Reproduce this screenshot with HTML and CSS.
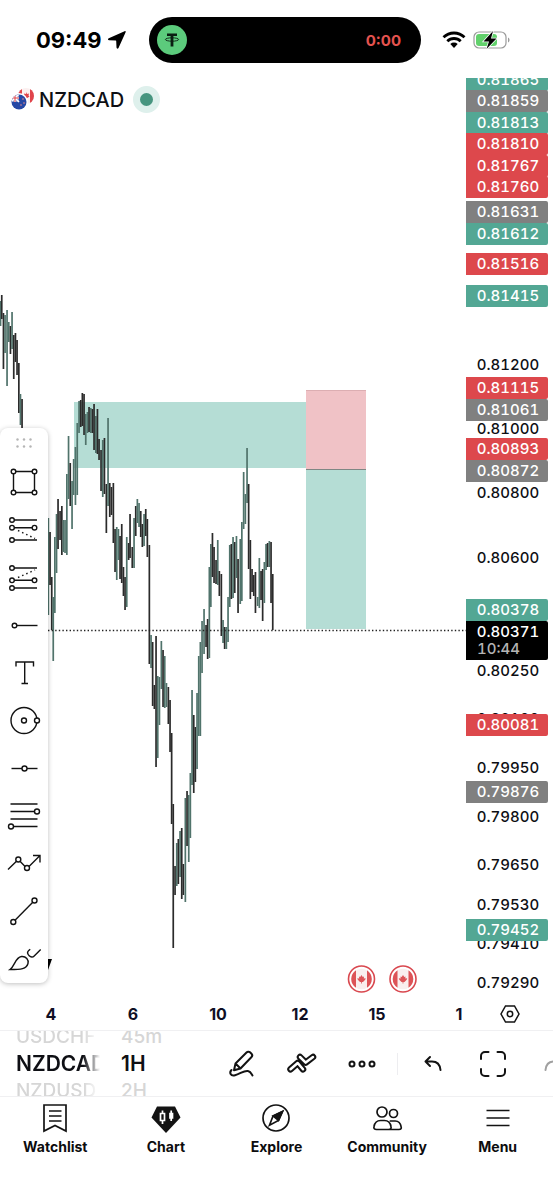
FILE: index.html
```html
<!DOCTYPE html>
<html lang="en">
<head>
  <meta charset="UTF-8">
  <title>NZDCAD</title>
  <meta name="viewport" content="width=device-width, initial-scale=1.0">
  <link rel="stylesheet" href="styles.css">
</head>
<body>

  <header class="status">
    <div class="clock">
      <span>09:49</span>
      <svg width="20" height="20" viewBox="0 0 20 20"><path d="M17.6 1.2 1.8 8.2c-1.2.6-1 1.9.3 2l6.6.3c.3 0 .5.2.5.5l.3 6.6c.1 1.3 1.4 1.5 2 .3l7-15.3c.5-1.1 0-1.8-.9-1.4z"/></svg>
    </div>
    <div class="island">
      <svg width="30" height="30" viewBox="0 0 30 30">
        <circle cx="15" cy="15" r="15" fill="#5ccb7c"/>
        <path d="M10 8.5h10v2.600h-3.600v10.400h-2.800V11.100H10z" fill="#0b1d12"/>
        <ellipse cx="15" cy="14.500" rx="6.600" ry="1.700" fill="none" stroke="#0b1d12" stroke-width=".9"/>
      </svg>
      <span>0:00</span>
    </div>
    <div class="signals">
      <svg width="24" height="18" viewBox="0 0 24 18">
        <path d="M1.5 6.3a15 15 0 0 1 21 0M5.300 10.200a9.600 9.600 0 0 1 13.400 0" fill="none" stroke="#000" stroke-width="2.800"/>
        <path d="M8.300 13a5.400 5.400 0 0 1 7.400 0L12 17z"/>
      </svg>
      <svg width="38" height="20" viewBox="0 0 38 20">
        <rect x="1" y="2" width="32" height="16" rx="5" fill="none" stroke="#9a9a9a" stroke-width="1.2"/>
        <path d="M35 7.500c2 .8 2 4.200 0 5z" fill="#9a9a9a"/>
        <rect x="3" y="4" width="21" height="12" rx="3" fill="#62d16c"/>
        <path d="M20 1 10.500 11.500h5.500L13.500 19 23.500 8.500H18z" stroke="#fff" stroke-width="1.5" paint-order="stroke"/>
      </svg>
    </div>
  </header>

  <main class="chart">
    <svg class="plot" id="plot"></svg>
    <div class="axis">
      <svg class="prices" id="prices"></svg>
      <button class="axis-settings" aria-label="Axis settings">
        <svg width="20" height="18" viewBox="0 0 20 18"><path d="M5.500 1h9L19 9l-4.500 8h-9L1 9z"/><circle cx="10" cy="9" r="2.700"/></svg>
      </button>
    </div>

    <h1 class="symbol">
      <svg width="24" height="24" viewBox="0 0 24 24">
        <clipPath id="cad"><circle cx="15" cy="8" r="8"/></clipPath>
        <g clip-path="url(#cad)">
          <rect x="7" width="16" height="16" fill="#fbf0f0"/>
          <path d="M7 0h4v16H7zM19 0h4v16h-4zM15 4l1 2 2-.5-.5 2 1 1-3 2-3-2 1-1-.5-2 2 .5z" fill="#e0444b"/>
        </g>
        <circle cx="8" cy="14" r="9" fill="#fff"/>
        <clipPath id="nzd"><circle cx="8" cy="14" r="7.5"/></clipPath>
        <g clip-path="url(#nzd)">
          <rect y="6" width="16" height="16" fill="#2547a5"/>
          <path d="M0 6h8v8H0z" fill="#7d8fca"/>
          <path d="M0 10h8M4 6v8M1 7l7 7M8 6l-7 7" stroke="#fff" stroke-width="1.6"/>
          <path d="M0 10h8M4 6v8" stroke="#e0444b"/>
          <circle cx="12" cy="11" r=".8" fill="#e88"/><circle cx="10" cy="17" r=".8" fill="#e88"/><circle cx="13" cy="15" r=".8" fill="#e88"/>
        </g>
      </svg>
      NZDCAD
      <span class="market-open"></span>
    </h1>

    <div class="tools">
      <svg class="grip" width="48" height="33" viewBox="0 0 48 33">
        <circle cx="17.5" cy="11.5" r="1.2"/><circle cx="24" cy="11.5" r="1.2"/><circle cx="30.5" cy="11.5" r="1.2"/>
        <circle cx="17.5" cy="18.5" r="1.2"/><circle cx="24" cy="18.5" r="1.2"/><circle cx="30.5" cy="18.5" r="1.2"/>
      </svg>
      <button aria-label="Rectangle"><svg viewBox="0 0 48 42"><path d="M13.5 10.5h21v21h-21z"/><circle cx="13.5" cy="10.5" r="2.3"/><circle cx="34.5" cy="10.5" r="2.3"/><circle cx="13.5" cy="31.5" r="2.3"/><circle cx="34.5" cy="31.5" r="2.3"/></svg></button>
      <button aria-label="Long position"><svg viewBox="0 0 48 42"><path d="M12 11h25M12 18.7h22M12 31h25"/><path class="dots" d="M18 21.5 35 29.5"/><circle cx="12" cy="11" r="2.3"/><circle cx="12" cy="18.7" r="2.3"/><circle cx="34.5" cy="18.7" r="2.3"/><circle cx="12" cy="31" r="2.3"/></svg></button>
      <button aria-label="Short position"><svg viewBox="0 0 48 42"><path d="M12 11h25M12 23.3h22M12 31h25"/><path class="dots" d="M18 20.5 35 13"/><circle cx="12" cy="11" r="2.3"/><circle cx="12" cy="23.3" r="2.3"/><circle cx="34.5" cy="23.3" r="2.3"/><circle cx="12" cy="31" r="2.3"/></svg></button>
      <button aria-label="Horizontal ray"><svg viewBox="0 0 48 42"><path d="M14.5 20.5h23"/><circle cx="14.5" cy="20.5" r="2.3"/></svg></button>
      <button aria-label="Text"><svg viewBox="0 0 48 42"><path d="M16 13.5V9h17.5v4.5M24.7 9v21.5M21.5 30.5H28"/></svg></button>
      <button aria-label="Circle"><svg viewBox="0 0 48 42"><circle cx="24" cy="19.5" r="13"/><circle cx="24" cy="19.5" r="2.5"/><circle cx="37" cy="19.5" r="2.5"/></svg></button>
      <button aria-label="Horizontal line"><svg viewBox="0 0 48 42"><path d="M11.5 19.5h26"/><circle cx="24.5" cy="19.5" r="2.5"/></svg></button>
      <button aria-label="Fib retracement"><svg viewBox="0 0 48 42"><path d="M10.5 7h27M10.5 14.5h27M10.5 22h27M10.5 29.5h27"/><circle cx="37" cy="14.5" r="2.5"/><circle cx="11" cy="29.5" r="2.5"/></svg></button>
      <button aria-label="Path"><svg viewBox="0 0 48 42"><path d="M8 24.5 18.3 14.5 27 23.5 40 10.5M33 10.5h7v7"/><circle cx="18.3" cy="14.5" r="2.5"/><circle cx="27" cy="23" r="2.5"/></svg></button>
      <button aria-label="Trend line"><svg viewBox="0 0 48 42"><path d="M34.5 7.5 13.3 29"/><circle cx="34.5" cy="7.5" r="2.5"/><circle cx="13.3" cy="29" r="2.5"/></svg></button>
      <button aria-label="Brush"><svg viewBox="0 0 48 42"><path d="M10 28.500C15 25 15 16.500 21.500 15.500c4.500-.5 7.500 3.500 6.500 7-1.500 5.500-7 6-18 6zM40.700 8.500l-6.500 6.500c-1.500 1.500-3.500 1.200-5-.3-2-2-2.200-3.500-.7-5l1.700-1.500"/></svg></button>
    </div>
  </main>

  <section class="toolbar">
    <div class="wheel wheel-symbol">
      <button>USDCHF</button>
      <button class="current">NZDCAD</button>
      <button>NZDUSD</button>
    </div>
    <div class="wheel wheel-interval">
      <button>45m</button>
      <button class="current">1H</button>
      <button>2H</button>
    </div>
    <button class="action" aria-label="Draw">
      <svg width="30" height="30" viewBox="0 0 30 30"><path d="M8.500 14.500 19.500 3.500c1-1 2.500-1.200 3.500-.2l1.500 1.500c1 1 .8 2.500-.2 3.500L13.500 19.500l-6.500 1.700zM8.500 14.500l5 5M4.500 21c-2.500 2.500-1 6.500 3.500 5.300 5-1.300 9.500-5.300 13-4.300 2.500.6 3.300 2.500 4.500 4.500"/></svg>
    </button>
    <button class="action" aria-label="Indicators">
      <svg width="30" height="24" viewBox="0 0 30 24">
        <path class="outer" d="M3.500 17.300 10.700 11l5.300 6.300M13 5l5.700 5.600 7.300-5.600"/>
        <path class="inner" d="M3.500 17.300 10.700 11l5.300 6.300M13 5l5.700 5.600 7.300-5.600"/>
      </svg>
    </button>
    <button class="action" aria-label="More">
      <svg width="28" height="10" viewBox="0 0 28 10"><circle cx="4" cy="5" r="2.5"/><circle cx="14" cy="5" r="2.5"/><circle cx="24" cy="5" r="2.5"/></svg>
    </button>
    <span class="divider"></span>
    <button class="action" aria-label="Undo">
      <svg width="20" height="18" viewBox="0 0 20 18"><path d="M7 2 2.500 6.500 7 11M2.500 6.500H9c5 0 8 3.500 8.500 8.500"/></svg>
    </button>
    <button class="action" aria-label="Full screen">
      <svg width="28" height="28" viewBox="0 0 28 28"><path d="M2 9V6a4 4 0 0 1 4-4h3.500M18.500 2H22a4 4 0 0 1 4 4v3M26 19v3a4 4 0 0 1-4 4h-3.500M9.500 26H6a4 4 0 0 1-4-4v-3"/></svg>
    </button>
    <button class="action faded" aria-label="Redo">
      <svg width="20" height="18" viewBox="0 0 20 18"><path d="M13 2l4.500 4.500L13 11M17.500 6.500H11c-5 0-8 3.500-8.500 8.500"/></svg>
    </button>
  </section>

  <nav class="tabs">
    <a href="#watchlist">
      <svg width="32" height="32" viewBox="0 0 32 32"><path d="M5 3h22v26l-11-5.500L5 29zM10 9h12.500M10 14h12.500M10 19h12.500"/></svg>
      Watchlist
    </a>
    <a href="#chart">
      <svg width="32" height="32" viewBox="0 0 32 32">
        <path d="M7 4.500h18L30.500 15.500 16 31 1.500 15.500z" fill="#131313" stroke="none"/>
        <path d="M10.500 11.500h4v7h-4zM12.500 8.500v3M12.500 18.500v3.500" stroke="#fff"/>
        <path d="M20 11.500h2.500v4.500H20zM21.200 8.500v10.500" fill="#fff" stroke="#fff"/>
      </svg>
      Chart
    </a>
    <a href="#explore">
      <svg width="32" height="32" viewBox="0 0 32 32"><circle cx="16" cy="16" r="13"/><path d="M22.500 9.500 13 14l-3.500 9.200 9-4.700z"/><path d="M22.500 9.500 13 14l5.500 4.500z" fill="#131313"/></svg>
      Explore
    </a>
    <a href="#community">
      <svg width="32" height="32" viewBox="0 0 32 32"><circle cx="11" cy="10" r="5"/><circle cx="22.500" cy="11.500" r="4"/><path d="M5.500 27.500h12c2 0 3-1 2.500-3-.8-4-3-6-6.500-6H9.500c-3.500 0-5.700 2-6.500 6-.5 2 .5 3 2.500 3zM17.500 27.500h10.500c2 0 2.500-1 2.200-2.500-.7-4-3-6-6-6h-5.500"/></svg>
      Community
    </a>
    <a href="#menu">
      <svg width="32" height="32" viewBox="0 0 32 32"><path d="M4.500 8.500h23M4.500 16h23M4.500 23.500h23"/></svg>
      Menu
    </a>
  </nav>

  <script src="script.js"></script>
</body>
</html>
```

FILE: styles.css
```css
* {
  box-sizing: border-box;
}

body {
  font-family: Inter, 'Liberation Sans', sans-serif;
  margin: 0;
  background: #fff;
  color: #0e0f14;
}

button {
  display: flex;
  align-items: center;
  justify-content: center;
  padding: 0;
  border: none;
  background: none;
  color: inherit;
  font: inherit;
  cursor: pointer;
}

svg {
  display: block;
  flex: none;
}

/* status bar */

.status {
  display: grid;
  grid-template-columns: 149fr 272fr 132fr;
  align-items: center;
  height: 78px;
  padding-top: 17px;
  padding-bottom: 15px;
}

.clock {
  display: flex;
  align-items: center;
  gap: 5px;
  padding-left: 36px;
  font-size: 22px;
  font-weight: 700;
  color: #000;
}

.island {
  display: flex;
  align-items: center;
  justify-content: space-between;
  height: 46px;
  padding: 0 20px 0 8px;
  border-radius: 23px;
  background: #000;
  color: #e5534f;
  font-size: 15px;
  font-weight: 700;
}

.signals {
  display: flex;
  align-items: center;
  gap: 7px;
  padding-left: 21px;
}

/* chart */

.chart {
  position: relative;
  display: flex;
}

.plot {
  flex: 1;
  min-width: 0;
  height: 952px;
}

.axis {
  width: 87px;
}

.prices {
  width: 100%;
  height: 920px;
}

.prices text {
  font-size: 15px;
  font-weight: 500;
  font-variant-numeric: tabular-nums;
  text-anchor: middle;
  fill: #0e0f14;
}

.prices .on-tag {
  fill: #fff;
}

.prices .countdown {
  fill: #b4b4b4;
  text-anchor: start;
}

.plot text {
  font-size: 16px;
  font-weight: 700;
  text-anchor: middle;
  fill: #0e0f24;
}

.axis-settings {
  width: 100%;
  height: 32px;
}

.axis-settings svg {
  fill: none;
  stroke: #131313;
  stroke-width: 1.5;
}

.symbol {
  position: absolute;
  top: 8px;
  left: 11px;
  display: flex;
  align-items: center;
  gap: 4px;
  margin: 0;
  font-size: 20px;
  font-weight: 500;
}

.market-open {
  width: 27px;
  height: 27px;
  margin-left: 5px;
  border: 7px solid #def0ec;
  border-radius: 50%;
  background: #46957f;
}

.tools {
  position: absolute;
  top: 350px;
  left: 0;
  display: flex;
  flex-direction: column;
  gap: 6px;
  width: 48px;
  border-radius: 8px;
  background: #fff;
  box-shadow: 0 1px 5px rgba(0, 0, 0, 0.25);
}

.tools .grip {
  margin-bottom: -6px;
}

.tools button svg {
  width: 48px;
  height: 42px;
  fill: none;
  stroke: #131313;
  stroke-width: 1.4;
}

.tools circle {
  fill: #fff;
}

.tools .grip circle {
  fill: #b5b5b5;
}

.tools .dots {
  stroke-dasharray: 1.5 3;
}

/* toolbar */

.toolbar {
  display: flex;
  align-items: center;
  height: 66px;
  padding-left: 16px;
  border-top: 1px solid #f0f0f2;
  overflow: hidden;
}

.wheel {
  display: flex;
  flex-direction: column;
  justify-content: center;
  height: 65px;
  overflow: hidden;
  font-size: 19px;
  font-weight: 500;
  line-height: 27px;
  color: #d6d6d6;
}

.wheel button {
  flex: none;
  justify-content: flex-start;
}

.wheel .current {
  font-size: 21px;
  font-weight: 600;
  color: #0e0f14;
}

.wheel-symbol {
  width: 84px;
  margin-right: 21px;
  -webkit-mask-image: linear-gradient(to right, #000 80%, transparent);
  mask-image: linear-gradient(to right, #000 80%, transparent);
}

.wheel-interval {
  flex: 1;
}

.action {
  flex: none;
  width: 60px;
  height: 60px;
}

.action svg {
  fill: none;
  stroke: #131313;
  stroke-width: 2;
  stroke-linecap: round;
  stroke-linejoin: round;
}

.action .outer {
  stroke-width: 6.5;
}

.action .inner {
  stroke: #fff;
  stroke-width: 2.5;
}

.divider {
  width: 1px;
  height: 22px;
  margin: 0 5px;
  background: #ededf0;
}

.faded {
  margin-right: -30px;
  opacity: 0.4;
}

/* bottom tabs */

.tabs {
  display: grid;
  grid-template-columns: repeat(5, 1fr);
  padding: 5px 0 40px;
  border-top: 1px solid #f0f0f2;
}

.tabs a {
  display: flex;
  flex-direction: column;
  align-items: center;
  gap: 5px;
  color: #0c0c0e;
  font-size: 14px;
  font-weight: 700;
  line-height: 16px;
  text-decoration: none;
}

.tabs svg {
  fill: none;
  stroke: #131313;
  stroke-width: 1.7;
}
```

FILE: script.js
```js
const NS = 'http://www.w3.org/2000/svg';
const TOP = 78;

const colors = { teal: '#53a794', gray: '#808080', red: '#dd484c', black: '#000' };

// [x, high, low, up]
const candles = [
  [0.5, 301, 326, 1], [1.7, 295, 319, 0], [3.4, 313, 369, 0], [5, 315, 353, 1], [7, 310, 386, 1],
  [8.7, 322, 342, 1], [10.4, 326, 354, 0], [12, 312, 349, 1], [13.7, 335, 379, 0], [15.4, 333, 362, 0],
  [17, 340, 375, 0], [18.8, 363, 413, 0], [20.4, 394, 425, 1], [22, 399, 428, 0],
  [48.3, 518, 615, 1], [50, 532, 585, 0], [51.7, 577, 630, 0], [53.2, 597, 661, 1], [54.8, 537, 613, 1],
  [56.5, 514, 573, 1], [58, 499, 549, 0], [60, 511, 540, 0], [61.8, 506, 555, 0], [63.4, 520, 552, 1],
  [65, 520, 553, 1], [66.8, 474, 555, 1], [68.5, 436, 499, 1], [70.2, 463, 506, 0], [72, 481, 529, 1],
  [73.6, 459, 495, 1], [75.4, 447, 505, 1], [77.2, 423, 495, 1], [79, 401, 433, 1], [80.7, 400, 427, 0],
  [82.3, 393, 426, 0], [84, 394, 435, 0], [85.7, 414, 445, 1], [87.4, 412, 433, 1], [89, 407, 432, 0],
  [90.7, 408, 433, 1], [92.4, 409, 433, 0], [94, 404, 450, 0], [95.8, 416, 453, 1], [97.4, 409, 454, 0],
  [99, 439, 460, 0], [101, 450, 491, 0], [102.7, 440, 497, 1], [104.4, 438, 494, 0], [106.3, 484, 533, 0],
  [108, 418, 506, 1], [109.7, 483, 517, 0], [111.4, 487, 515, 0], [113.3, 483, 543, 0],
  [115, 529, 572, 0], [116.7, 527, 580, 1], [118.4, 529, 560, 1], [120, 536, 579, 0], [121.7, 524, 583, 0],
  [123.4, 567, 596, 0], [125, 577, 610, 0], [126.7, 537, 607, 1], [128.6, 543, 560, 0], [130, 514, 558, 0],
  [132.2, 547, 568, 0], [134, 518, 568, 1], [135.7, 506, 536, 0], [137.3, 499, 523, 1], [139, 503, 527, 1],
  [140.7, 511, 537, 0], [142.3, 524, 547, 0], [144, 514, 546, 1], [145.7, 509, 536, 0], [147.3, 519, 557, 0],
  [149.3, 545, 664, 0], [151, 635, 668, 1], [152.6, 642, 706, 0], [154.3, 685, 709, 0], [156, 636, 767, 0],
  [157.7, 676, 758, 1], [159.4, 677, 725, 1], [161.3, 641, 689, 1], [163, 650, 707, 0], [164.7, 656, 708, 1],
  [166.4, 683, 707, 1], [168.3, 687, 724, 0], [170, 700, 752, 0], [171.6, 733, 824, 0], [173.2, 804, 948, 0],
  [175, 866, 895, 0], [176.7, 843, 886, 1], [178.3, 839, 884, 0], [180, 831, 877, 1], [181.7, 828, 899, 0],
  [183.3, 864, 895, 0], [185.3, 798, 902, 1], [187, 791, 846, 0], [188.7, 795, 862, 1], [190.3, 773, 838, 1],
  [192, 690, 785, 1], [193.7, 715, 793, 0], [195.3, 727, 782, 0], [197, 693, 769, 1], [198.7, 656, 736, 1],
  [200.3, 642, 736, 1], [202, 621, 673, 1], [204, 609, 654, 1], [206, 625, 647, 0], [207.6, 619, 659, 0],
  [209.3, 567, 658, 1], [210.8, 544, 607, 1], [212.4, 533, 577, 0], [214, 547, 583, 0], [216, 560, 584, 0],
  [217.7, 540, 585, 1], [219.3, 571, 596, 0], [221.3, 574, 636, 0], [223, 620, 643, 1], [224.6, 627, 649, 0],
  [226.3, 627, 649, 1], [228, 597, 642, 1], [229.7, 545, 607, 1], [231.3, 544, 599, 0], [233, 537, 598, 1],
  [234.7, 542, 593, 0], [236.4, 536, 578, 1], [238, 559, 613, 0], [240.2, 539, 604, 1], [241.8, 522, 601, 1],
  [243.6, 472, 529, 1], [245.3, 494, 524, 1], [247, 448, 503, 1], [248.6, 484, 569, 0], [250.3, 540, 599, 0],
  [252, 569, 592, 0], [253.7, 575, 596, 0], [255.4, 572, 613, 0], [257.6, 597, 606, 1], [259.3, 558, 608, 1],
  [261, 571, 600, 0], [262.6, 569, 621, 0], [264.3, 562, 603, 1], [266, 544, 570, 1], [267.6, 543, 567, 0],
  [269.3, 541, 567, 1], [271, 542, 603, 0], [272.7, 574, 630, 0]
];

// [price, y]
const ticks = [
  ['0.81200', 364], ['0.81000', 428], ['0.80800', 492], ['0.80600', 557], ['0.80250', 670],
  ['0.80100', 718], ['0.79950', 767], ['0.79800', 816], ['0.79650', 864], ['0.79530', 904],
  ['0.79410', 943], ['0.79290', 982]
];

// [price, y, color]
const tags = [
  ['0.81865', 79, 'teal'], ['0.81859', 100, 'gray'], ['0.81813', 122, 'teal'], ['0.81810', 143, 'red'],
  ['0.81767', 165, 'red'], ['0.81760', 186, 'red'], ['0.81631', 211, 'gray'], ['0.81612', 233, 'teal'],
  ['0.81516', 263, 'red'], ['0.81415', 295, 'teal'], ['0.81115', 387, 'red'], ['0.81061', 409, 'gray'],
  ['0.80893', 448, 'red'], ['0.80872', 470, 'gray'], ['0.80378', 609, 'teal'], ['0.80081', 724, 'red'],
  ['0.79876', 791, 'gray'], ['0.79452', 929, 'teal']
];

const days = [['4', 51], ['6', 133], ['10', 218], ['12', 300], ['15', 377], ['1', 459]];

function add(parent, name, attrs, text) {
  const el = document.createElementNS(NS, name);
  for (const key in attrs) el.setAttribute(key, attrs[key]);
  if (text) el.textContent = text;
  parent.appendChild(el);
  return el;
}

function box(parent, x, y, width, height, fill) {
  add(parent, 'rect', { x, y: y - TOP, width, height, fill });
}

function drawPlot() {
  const plot = document.getElementById('plot');

  box(plot, 74, 402, 232, 66, '#b5ddd5');
  box(plot, 306, 390, 60, 79, '#f0c2c6');
  box(plot, 306, 390, 60, 1, '#dcaeb2');
  box(plot, 306, 469, 60, 160, '#b5ddd5');
  box(plot, 306, 469, 60, 1, '#7f8784');

  candles.forEach(([x, high, low, up]) => {
    box(plot, x - 0.8, high, 1.7, low - high, up ? '#50736b' : '#2b2b2b');
  });

  add(plot, 'line', {
    x1: 48, x2: '100%', y1: 630.5 - TOP, y2: 630.5 - TOP,
    stroke: '#222', 'stroke-width': 1.4, 'stroke-dasharray': '1.4 2.2'
  });
  add(plot, 'path', { d: 'M46 881h6l-4 11h-2z', fill: '#000' });

  [361.5, 403].forEach(x => drawEvent(plot, x, 979 - TOP));
  days.forEach(([day, x]) => add(plot, 'text', { x, y: 942 }, day));
}

function drawEvent(plot, x, y) {
  const g = add(plot, 'g', { transform: `translate(${x} ${y})` });
  add(g, 'circle', { r: 13, fill: '#fff', stroke: '#d9484f', 'stroke-width': 1.6 });
  add(g, 'circle', { r: 10.3, fill: '#f9eeee' });
  add(g, 'path', {
    d: 'M-5.5-8.7v17.4a10.3 10.3 0 0 1 0-17.4zM5.5-8.7v17.4a10.3 10.3 0 0 0 0-17.4zM0-4l1.300 2 1.200-.5-.2 2 1.900-.3-.5 1.500L1.500 3H.4v1.500h-.8V3h-1.100l-2.200-2.300-.5-1.500 1.900.3-.2-2 1.200.5z',
    fill: '#dd5357'
  });
}

function drawPrices() {
  const prices = document.getElementById('prices');

  ticks.forEach(([price, y]) => add(prices, 'text', { x: 42, y: y + 6 - TOP }, price));

  tags.forEach(([price, y, color]) => drawTag(prices, price, y, color, 22));

  drawTag(prices, '0.80371', 631, 'black', 39);
  add(prices, 'text', { x: 11, y: 654 - TOP, class: 'on-tag countdown' }, '10:44');
}

function drawTag(prices, price, y, color, height) {
  const top = y - 10 - TOP;
  add(prices, 'path', {
    d: `M0 ${top}h80a2 2 0 0 1 2 2v${height - 4}a2 2 0 0 1-2 2H0z`,
    fill: colors[color]
  });
  add(prices, 'text', { x: 42, y: y + 6 - TOP, class: 'on-tag' }, price);
}

drawPlot();
drawPrices();
```
